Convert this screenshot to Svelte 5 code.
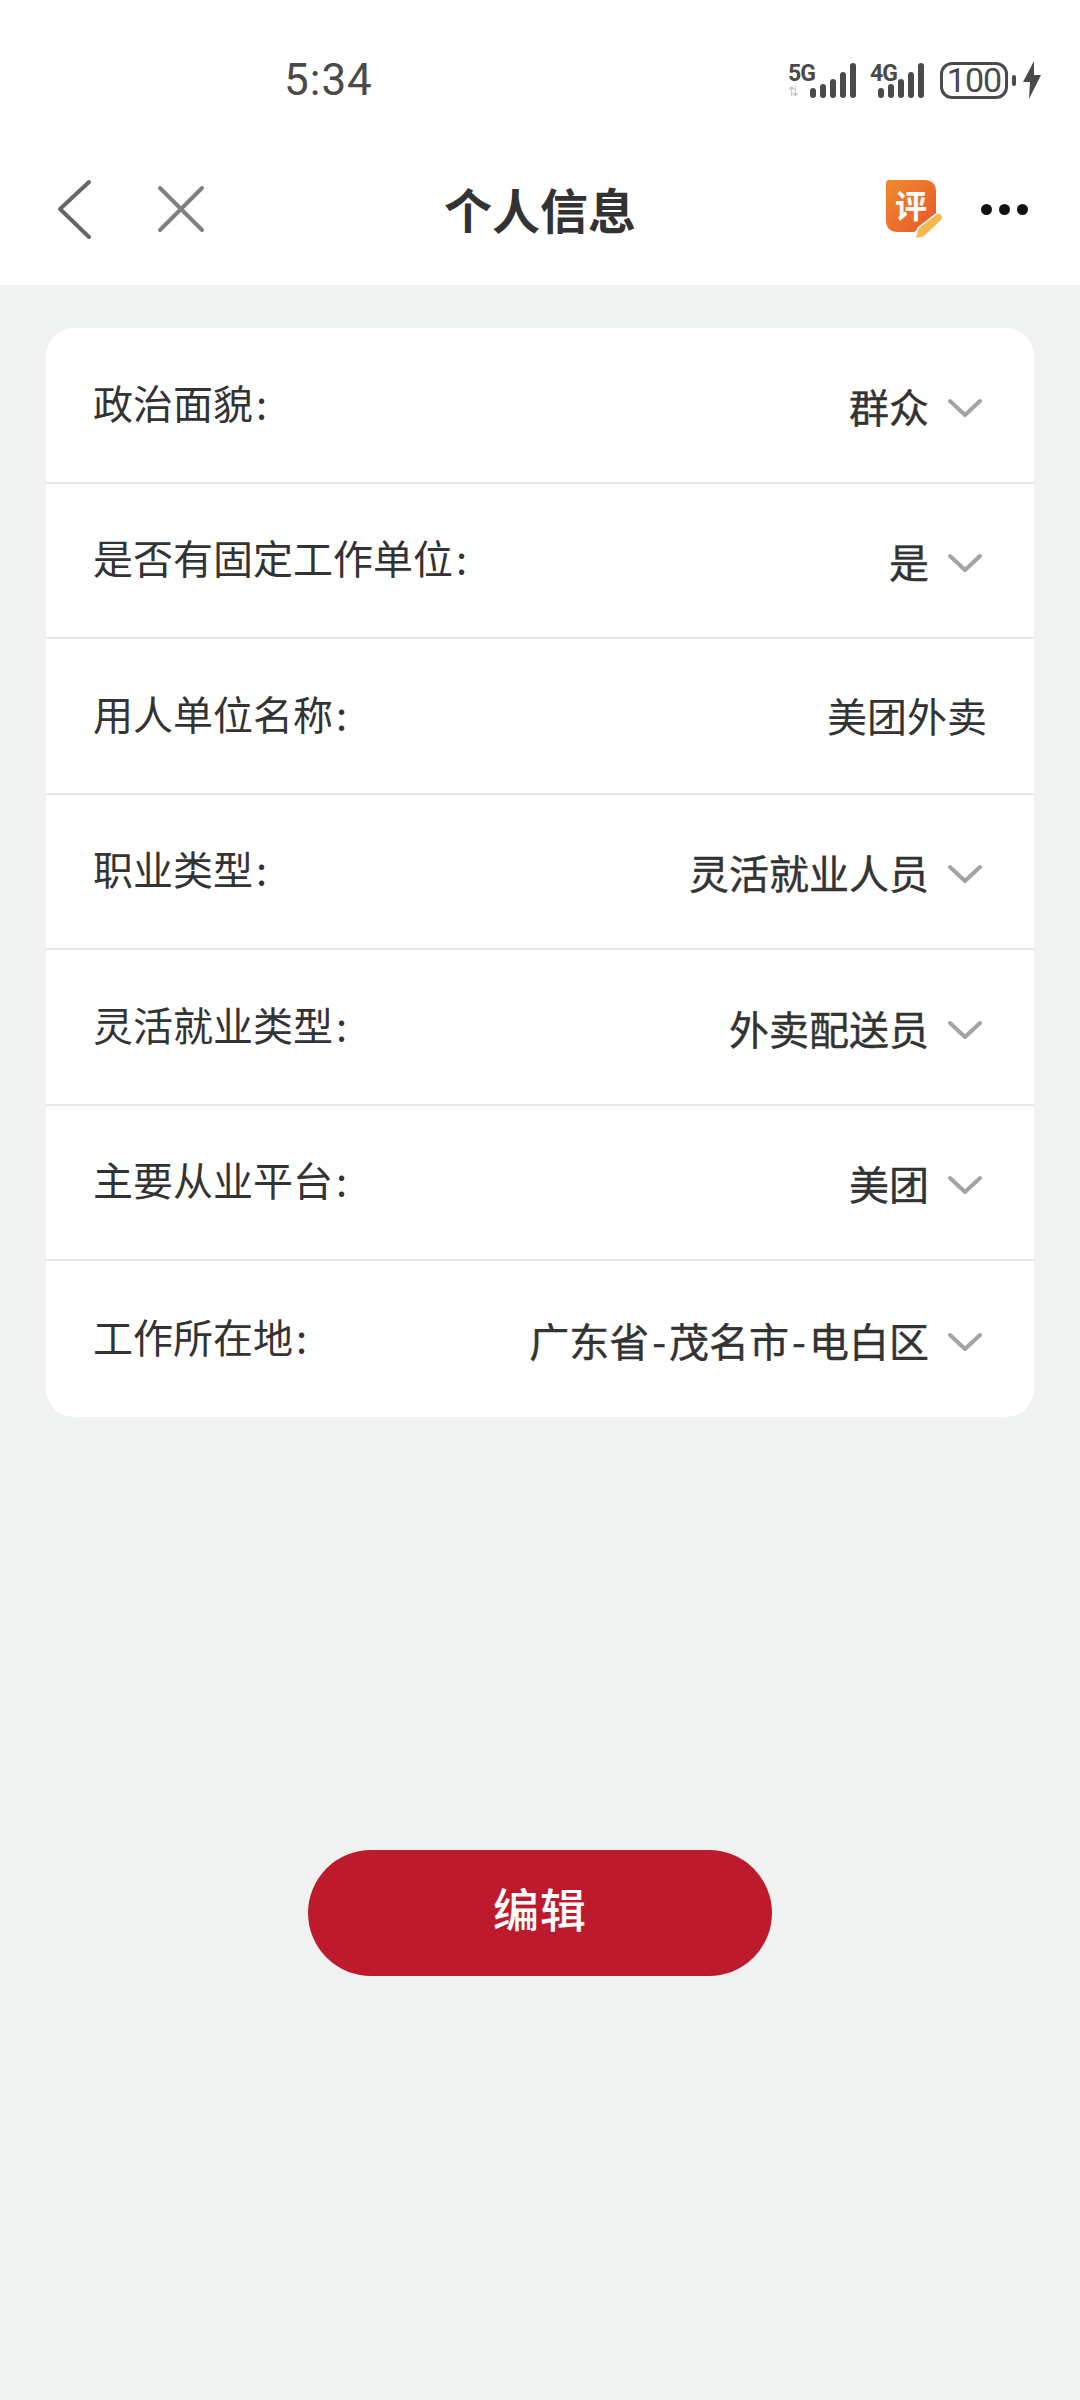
<script>
  const rows = [
    { label: '政治面貌', value: '群众', select: true },
    { label: '是否有固定工作单位', value: '是', select: true },
    { label: '用人单位名称', value: '美团外卖', select: false },
    { label: '职业类型', value: '灵活就业人员', select: true },
    { label: '灵活就业类型', value: '外卖配送员', select: true },
    { label: '主要从业平台', value: '美团', select: true },
    { label: '工作所在地', value: '广东省-茂名市-电白区', select: true },
  ];
  const sig = [10, 14, 19, 26, 35];
</script>

<div class="page">
  <header class="top">
    <div class="status">
      <span class="time">5:34</span>
      <div class="indicators">
        <div class="net five">
          <div class="net-label">
            <span class="gen">5G</span>
            <span class="updown">⇅</span>
          </div>
          <div class="bars">
            {#each sig as h}<i style="height:{h}px"></i>{/each}
          </div>
        </div>
        <div class="net four">
          <div class="net-label"><span class="gen">4G</span></div>
          <div class="bars">
            {#each sig as h}<i style="height:{h}px"></i>{/each}
          </div>
        </div>
        <div class="battery"><span>100</span></div>
        <i class="nub"></i>
        <svg class="bolt" width="20" height="38" viewBox="0 0 20 38"><path d="M12 0 L1 21 H8 L7 38 L19 14 H12 Z" fill="#4a4a4a"/></svg>
      </div>
    </div>
    <nav class="bar">
      <div class="bar-left">
        <svg width="40" height="68" viewBox="0 0 40 68"><path d="M33 7 L4 34 L33 62" fill="none" stroke="#666" stroke-width="4" stroke-linecap="round" stroke-linejoin="round"/></svg>
        <svg width="54" height="54" viewBox="0 0 54 54"><path d="M6 6 L48 48 M48 6 L6 48" fill="none" stroke="#808080" stroke-width="4" stroke-linecap="round"/></svg>
      </div>
      <h1>个人信息</h1>
      <div class="bar-right">
        <div class="review">
          <svg width="60" height="64" viewBox="0 0 60 64">
            <defs>
              <linearGradient id="rv" x1="0" y1="0" x2="1" y2="1">
                <stop offset="0" stop-color="#f08a2c"/>
                <stop offset="1" stop-color="#e8562c"/>
              </linearGradient>
            </defs>
            <path d="M3 2 H38 Q50 2 50 14 V38 L28 54 H12 Q0 54 0 42 V5 Q0 2 3 2 Z" fill="url(#rv)"/>
            <path d="M29 61 L32 50 L50 36 Q53 33 56 37 Q58 40 55 43 L38 59 Z" fill="#f4b94e" stroke="#fff" stroke-width="1.5"/>
          </svg>
          <span>评</span>
        </div>
        <div class="dots"><i></i><i></i><i></i></div>
      </div>
    </nav>
  </header>

  <main class="content">
    <section class="card">
      {#each rows as row}
        <div class="row">
          <span class="label">{row.label}<span class="colon">:</span></span>
          <div class="value" class:plain={!row.select}>
            <span>
              {#each row.value.split('-') as part, i}{#if i}<span class="sep">-</span>{/if}{part}{/each}
            </span>
            {#if row.select}
              <svg width="34" height="20" viewBox="0 0 34 20"><path d="M2 3 L17 17 L32 3" fill="none" stroke="#a3a3a3" stroke-width="4" stroke-linecap="round" stroke-linejoin="round"/></svg>
            {/if}
          </div>
        </div>
      {/each}
    </section>
    <button class="edit">编辑</button>
  </main>
</div>

<style>
  :global(body) {
    margin: 0;
    background: #f0f2f2;
  }
  .page {
    height: 2400px;
    display: flex;
    flex-direction: column;
    font-family: "Noto Sans CJK SC", "Noto Sans", sans-serif;
    color: #333;
    overflow: hidden;
  }

  /* ---- status + title bar ---- */
  .top {
    background: #fff;
    height: 285px;
    flex-shrink: 0;
  }
  .status {
    height: 140px;
    display: flex;
    justify-content: space-between;
    align-items: center;
    padding: 0 38px 0 284px;
    box-sizing: border-box;
  }
  .time {
    font-family: Roboto, "Noto Sans", sans-serif;
    font-size: 44px;
    color: #4a4a4a;
    letter-spacing: 1px;
    margin-top: 20px;
  }
  .indicators {
    display: flex;
    align-items: center;
    margin-top: 20px;
  }
  .net {
    display: flex;
    align-items: flex-end;
  }
  .net.five {
    margin-right: 14px;
  }
  .net.five .bars {
    margin-left: -4px;
  }
  .net.four {
    margin-right: 16px;
  }
  .net.four .bars {
    margin-left: -18px;
  }
  .net-label {
    width: 26px;
    height: 36px;
    display: flex;
    flex-direction: column;
    font-family: Roboto, sans-serif;
    line-height: 1;
  }
  .gen {
    font-size: 23px;
    font-weight: 700;
    color: #4a4a4a;
    height: 23px;
    letter-spacing: -1px;
  }
  .updown {
    font-size: 13px;
    color: #c4c4c4;
    font-family: "DejaVu Sans", sans-serif;
  }
  .bars {
    display: flex;
    align-items: flex-end;
    gap: 4px;
    height: 36px;
  }
  .bars i {
    display: block;
    width: 6px;
    background: #4a4a4a;
    border-radius: 3px;
  }
  .battery {
    width: 68px;
    height: 37px;
    box-sizing: border-box;
    border: 3px solid #4a4a4a;
    border-radius: 12px;
    display: flex;
    align-items: center;
    justify-content: center;
    font-family: Roboto, sans-serif;
    font-size: 34px;
    letter-spacing: -1px;
    color: #4a4a4a;
    line-height: 1;
  }
  .nub {
    width: 4px;
    height: 11px;
    background: #4a4a4a;
    border-radius: 2px;
    margin: 0 6px 0 4px;
  }

  .bar {
    height: 130px;
    display: flex;
    align-items: center;
    justify-content: space-between;
    padding: 0 52px 0 56px;
    position: relative;
    margin-top: 4px;
  }
  .bar-left {
    display: flex;
    align-items: center;
    gap: 58px;
  }
  .bar h1 {
    position: absolute;
    left: 0;
    right: 0;
    margin: -2px 0 0;
    text-align: center;
    font-size: 48px;
    font-weight: 700;
    color: #333;
  }
  .bar-right {
    display: flex;
    align-items: center;
    gap: 35px;
  }
  .review {
    position: relative;
    width: 60px;
    height: 64px;
    margin-top: 2px;
  }
  .review span {
    position: absolute;
    left: 9px;
    top: 6px;
    font-size: 32px;
    line-height: 40px;
    font-weight: 700;
    color: #fff;
  }
  .dots {
    display: flex;
    gap: 7px;
  }
  .dots i {
    width: 11px;
    height: 11px;
    background: #111;
    border-radius: 50%;
  }

  /* ---- form card ---- */
  .content {
    flex: 1;
    display: flex;
    flex-direction: column;
    align-items: center;
    padding: 43px 46px 0;
  }
  .card {
    width: 100%;
    background: #fff;
    border-radius: 28px;
    overflow: hidden;
  }
  .row {
    height: 155.5px;
    box-sizing: border-box;
    display: flex;
    justify-content: space-between;
    align-items: center;
    padding: 0 46px 0 47px;
    border-bottom: 2px solid #e8e8e8;
  }
  .row:last-child {
    border-bottom: none;
  }
  .label {
    font-size: 40px;
    line-height: 1;
    margin-top: -6px;
    color: #333;
  }
  .colon {
    margin-left: 3px;
  }
  .value {
    display: flex;
    align-items: center;
    gap: 19px;
    font-size: 40px;
    line-height: 1;
    margin-top: 2px;
    margin-right: 6px;
    -webkit-text-stroke: 0.4px #333;
    color: #333;
  }
  .value svg {
    margin-top: 4px;
  }
  .value.plain {
    margin-top: -2px;
    margin-right: 1px;
    -webkit-text-stroke: 0;
  }
  .sep {
    margin: 0 3px;
  }

  .edit {
    margin-top: 433px;
    width: 464px;
    height: 126px;
    padding: 0 0 12px;
    border: none;
    border-radius: 63px;
    background: #bd1a2d;
    color: #fff;
    font-family: inherit;
    font-size: 46px;
    font-weight: 500;
    letter-spacing: 1px;
  }
</style>
